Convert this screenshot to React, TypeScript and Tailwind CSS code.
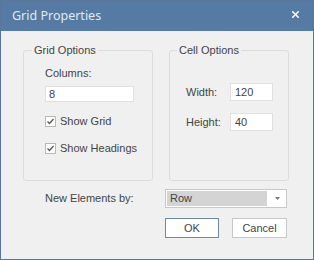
import { X } from 'lucide-react'

function Check() {
  return (
    <span className="flex h-[11px] w-[11px] items-center justify-center border border-[#b8b8b8] bg-white">
      <svg width="9" height="9" viewBox="0 0 9 9">
        <path d="M1.5 4.5 L3.5 6.5 L7.5 2" fill="none" stroke="#555" strokeWidth="1.3" />
      </svg>
    </span>
  )
}

export default function App() {
  return (
    <div
      className="flex h-[260px] w-[314px] flex-col border border-[#5a7799] bg-[#f0f0f0] text-[11px] text-[#444]"
      style={{ fontFamily: '"Liberation Sans", Arial, sans-serif' }}
    >
      <div className="flex h-[30px] items-center justify-between bg-[#557aa3] pl-[11px] pr-[12px]">
        <span className="text-[12.5px] text-[#e3e9f0]" style={{ fontFamily: '"Noto Sans", sans-serif' }}>
          Grid Properties
        </span>
        <X className="mb-[3px] h-[11px] w-[11px] text-white" strokeWidth={3.5} />
      </div>

      <div className="flex gap-[16px] pl-[22px] pt-[19px]">
        <div className="relative h-[131px] w-[130px] rounded-[3px] border border-[#dcdcdc] pl-[21px]">
          <span className="absolute left-[8px] top-[-8px] bg-[#f0f0f0] px-[2px] leading-[14px]">Grid Options</span>
          <div className="pt-[15px] leading-[14px]">Columns:</div>
          <div className="mt-[6px] flex h-[16px] w-[89px] items-center border border-[#e0e0e0] bg-white pl-[3px]">8</div>
          <label className="mt-[12px] flex h-[14px] items-center gap-[4px]">
            <Check />
            Show Grid
          </label>
          <label className="mt-[13px] flex h-[14px] items-center gap-[4px]">
            <Check />
            Show Headings
          </label>
        </div>

        <div className="relative h-[131px] w-[120px] rounded-[3px] border border-[#dcdcdc] pl-[16px]">
          <span className="absolute left-[7px] top-[-8px] bg-[#f0f0f0] px-[2px] leading-[14px]">Cell Options</span>
          <div className="mt-[32px] flex items-center">
            <span className="w-[44px]">Width:</span>
            <div className="flex h-[18px] w-[43px] items-center border border-[#e0e0e0] bg-white pl-[4px]">120</div>
          </div>
          <div className="mt-[12px] flex items-center">
            <span className="w-[44px]">Height:</span>
            <div className="flex h-[18px] w-[43px] items-center border border-[#e0e0e0] bg-white pl-[4px]">40</div>
          </div>
        </div>
      </div>

      <div className="mt-[8px] flex items-center pl-[44px]">
        <span className="w-[120px]">New Elements by:</span>
        <div className="flex h-[19px] w-[122px] border border-[#c8c8c8] bg-white">
          <div className="m-[1px] flex flex-1 items-center bg-[#d4d4d4] pl-[3px]">Row</div>
          <div className="flex w-[18px] items-center justify-center">
            <svg width="5" height="3" viewBox="0 0 5 3">
              <path d="M0 0 L5 0 L2.5 3 Z" fill="#777" />
            </svg>
          </div>
        </div>
      </div>

      <div className="mt-[10px] flex gap-[13px] pl-[164px]">
        <button className="h-[20px] w-[54px] border border-[#6f88a6] bg-white">OK</button>
        <button className="h-[20px] w-[55px] border border-[#c8c8c8] bg-white">Cancel</button>
      </div>
    </div>
  )
}
